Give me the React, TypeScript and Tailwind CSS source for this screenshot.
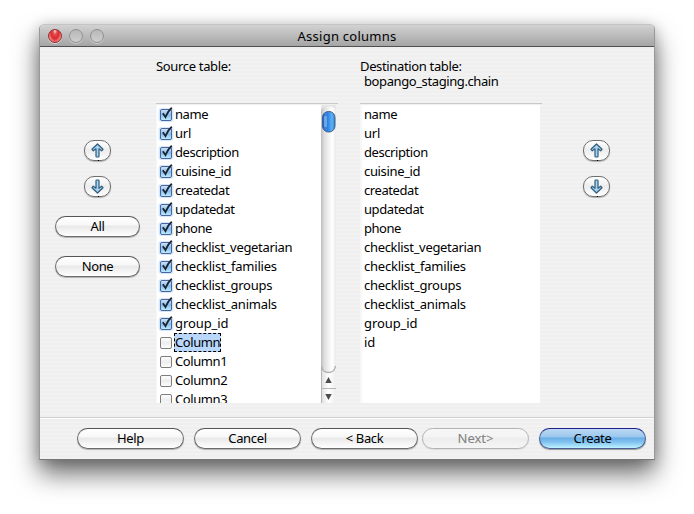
import React from "react";
import clsx from "clsx";

const destination: [string, string][] = [
  ["name", "tracking-[-0.45px]"],
  ["url", "tracking-[-0.2px]"],
  ["description", "tracking-[-0.42px]"],
  ["cuisine_id", "tracking-[-0.35px]"],
  ["createdat", "tracking-[-0.42px]"],
  ["updatedat", "tracking-[-0.42px]"],
  ["phone", "tracking-[-0.5px]"],
  ["checklist_vegetarian", "tracking-[-0.31px]"],
  ["checklist_families", "tracking-[-0.22px]"],
  ["checklist_groups", "tracking-[-0.27px]"],
  ["checklist_animals", "tracking-[-0.24px]"],
  ["group_id", "tracking-[-0.08px]"],
];

const extra = ["Column", "Column1", "Column2", "Column3"];

function Arrow({ down = false }: { down?: boolean }) {
  return (
    <button className="relative flex h-[21px] w-[27px] items-center justify-center rounded-[10px] border border-[#6f6f6f] bg-linear-to-b from-white via-[#ededed] to-white shadow-[0_1px_1px_#00000045]">
      <svg width="13" height="15" viewBox="0 0 13 15" className={clsx(down && "rotate-180")}>
        <path
          d="M6.5 1 L12 6.3 L10.7 7.8 L8 5.8 V13.2 Q8 14 7.2 14 H5.8 Q5 14 5 13.2 V5.8 L2.3 7.8 L1 6.3 Z"
          fill="#a9d3ee"
          stroke="#2d5c7e"
          strokeWidth="1.2"
          strokeLinejoin="round"
        />
      </svg>
      <span className="absolute -bottom-[1px] left-[13px] h-[1px] w-px bg-black" />
    </button>
  );
}

function PushButton({ label, kind = "normal", width = "w-[107px]" }: { label: string; kind?: "normal" | "disabled" | "primary"; width?: string }) {
  return (
    <button
      className={clsx(
        "flex h-[21px] shrink-0 items-center justify-center rounded-full border text-[13px] leading-none",
        width,
        label === "Next>" ? "tracking-[0px]" : "tracking-[-0.35px]",
        kind === "normal" &&
          "border-[#6c6c6c] border-t-[#555] bg-[linear-gradient(#fff_0%,#f8f8f8_40%,#e9e9e9_50%,#f4f4f4_75%,#fff_100%)] shadow-[0_1px_1px_#00000045]",
        kind === "disabled" &&
          "border-[#b3b3b3] bg-[linear-gradient(#f7f7f7_0%,#f4f4f4_40%,#ededed_50%,#f5f5f5_100%)] text-[#808080] shadow-[0_1px_1px_#00000015]",
        kind === "primary" &&
          "border-[#4a5f94] border-t-[#22228c] bg-[linear-gradient(#bcd8f4_0%,#9cc8ee_40%,#6aaee5_48%,#83c3f0_70%,#bdf2ff_100%)] shadow-[0_1px_1px_#00000060]",
      )}
    >
      {label}
    </button>
  );
}

function CheckBox({ checked }: { checked: boolean }) {
  return (
    <svg width="16" height="19" viewBox="0 0 16 19" className="shrink-0">
      <defs>
        <linearGradient id="on" x1="0" y1="0" x2="0" y2="1">
          <stop offset="0" stopColor="#d3e6f8" />
          <stop offset=".5" stopColor="#87bdec" />
          <stop offset="1" stopColor="#c0f0ff" />
        </linearGradient>
        <linearGradient id="off" x1="0" y1="0" x2="0" y2="1">
          <stop offset="0" stopColor="#fff" />
          <stop offset=".5" stopColor="#eee" />
          <stop offset="1" stopColor="#fff" />
        </linearGradient>
      </defs>
      {checked && <rect x="0.5" y="3" width="15" height="14" rx="3" fill="#a9d2f5" opacity=".5" />}
      <rect x="2.5" y="4.5" width="11" height="11" rx="1.5" fill={checked ? "url(#on)" : "url(#off)"} stroke={checked ? "#4a64a0" : "#7d7d7d"} />
      {checked && <path d="M4.800 8.300 L7.500 12 Q9.500 6.500 13.800 2.800" fill="none" stroke="#1c2530" strokeWidth="1.800" />}
    </svg>
  );
}

function SourceRow({ label, checked, tracking }: { label: string; checked: boolean; tracking?: string }) {
  const selected = label === "Column";
  return (
    <li className="flex h-[19px] items-center">
      <CheckBox checked={checked} />
      <span
        className={clsx(
          "flex h-[19px] items-center border border-dashed leading-none whitespace-nowrap",
          tracking,
          selected ? "w-[47px] border-black bg-[#b9d7fb]" : "border-transparent",
        )}
      >
        {label}
      </span>
    </li>
  );
}

function ScrollBar() {
  return (
    <div className="flex h-[298px] w-[15px] flex-col bg-[linear-gradient(90deg,#bdbdbd_0%,#dedede_22%,#f7f7f7_60%,#fff_75%,#eaeaea_100%)]">
      <svg width="15" height="298" viewBox="0 0 15 298">
        <defs>
          <linearGradient id="thumb" x1="0" x2="1" y1="0" y2="0">
            <stop offset="0" stopColor="#1650b8" />
            <stop offset=".2" stopColor="#3c86e2" />
            <stop offset=".42" stopColor="#2f80e0" />
            <stop offset=".75" stopColor="#58b4f8" />
            <stop offset="1" stopColor="#4080c8" />
          </linearGradient>
          <linearGradient id="foot" x1="0" x2="1" y1="0" y2="0">
            <stop offset="0" stopColor="#ddd" />
            <stop offset=".5" stopColor="#fff" />
            <stop offset="1" stopColor="#eee" />
          </linearGradient>
        </defs>
        <path d="M0 0 H15 V5 Q13 1.500 7.500 1.500 Q2 1.500 0 5Z" fill="#e6e6e6" />
        <rect x="1.500" y="6.500" width="12.500" height="20.500" rx="6" fill="url(#thumb)" stroke="#3f5f8c" />
        <rect x="3" y="11" width="3" height="11" rx="1" fill="#8fc0f5" opacity=".6" />
        <path d="M0 260 Q1 267.500 7.500 267.500 Q14 267.500 15 260 V298 H0Z" fill="url(#foot)" />
        <path d="M0.500 261 Q1.500 267.500 7.500 267.500 Q13.500 267.500 14.500 261" fill="none" stroke="#b0b0b0" strokeWidth="1.400" />
        <rect x="0" y="262" width="1" height="36" fill="#b5b5b5" />
        <path d="M4.300 278 H10.700 L7.500 272Z M4.300 289 H10.700 L7.500 295Z" fill="#4b4b4b" />
        <rect x="0" y="283" width="15" height="1" fill="#b5b5b5" />
      </svg>
    </div>
  );
}

export default function App() {
  return (
    <div className="h-[514px] w-[694px] overflow-hidden bg-white pt-[24px] pl-[39px] font-['Noto_Sans','Open_Sans',sans-serif] text-[13px] text-black">
      <div className="flex h-[436px] w-[616px] flex-col overflow-visible rounded-t-[5px] border border-[#989898] border-t-[#c4c4c4] border-b-[#777] bg-[repeating-linear-gradient(#f2f2f2_0px,#f2f2f2_2px,#efefef_2px,#efefef_4px)] shadow-[0_14px_26px_#00000090,0_2px_14px_#00000030]">
        <header className="flex h-[22px] shrink-0 items-center rounded-t-[4px] border-b border-[#505050] bg-linear-to-b from-[#d2d2d2] to-[#a5a5a5] pl-[8px]">
          <div className="flex w-[100px] gap-[7px]">
            <span className="h-[14px] w-[14px] rounded-full border border-[#8e3030] bg-[radial-gradient(ellipse_at_50%_8%,#ffdada_0%,#e85050_22%,#d82a30_48%,#ff8d8d_80%,#ffc0c0_100%)] shadow-[0_1px_0_#ffffff80]" />
            <span className="h-[14px] w-[14px] rounded-full border border-[#909090] bg-linear-to-b from-[#b8b8b8] to-[#cecece] shadow-[0_1px_0_#ffffff70]" />
            <span className="h-[14px] w-[14px] rounded-full border border-[#909090] bg-linear-to-b from-[#b8b8b8] to-[#cecece] shadow-[0_1px_0_#ffffff70]" />
          </div>
          <h1 className="w-[398px] pt-[2px] text-center text-[13px] leading-none tracking-[0.25px]">Assign columns</h1>
        </header>

        <main className="flex h-[370px] shrink-0">
          <div className="flex w-[116px] flex-col pt-[93px] pl-[15px]">
            <div className="flex flex-col gap-[15px] pl-[29px]">
              <Arrow />
              <Arrow down />
            </div>
            <div className="flex flex-col gap-[19px] pt-[19px]">
              <PushButton label="All" width="w-[85px]" />
              <PushButton label="None" width="w-[85px]" />
            </div>
          </div>

          <section className="w-[182px]">
            <div className="h-[56px] pt-[12px] leading-[15px] tracking-[-0.33px]">Source table:</div>
            <div className="flex h-[300px] border-t border-[#c8c8c8] pt-px">
              <ul className="h-[298px] w-[165px] overflow-hidden border-l border-[#f7f7f7] bg-white pl-px">
                {destination.map(([label, tracking]) => (
                  <SourceRow key={label} label={label} tracking={tracking} checked />
                ))}
                {extra.map((label) => (
                  <SourceRow key={label} label={label} tracking="tracking-[-0.4px]" checked={false} />
                ))}
              </ul>
              <ScrollBar />
            </div>
          </section>

          <section className="ml-[22px] w-[182px]">
            <div className="h-[56px] pt-[12px] leading-[15px]">
              <p className="tracking-[-0.35px]">Destination table:</p>
              <p className="pl-[4px] tracking-[-0.4px]">bopango_staging.chain</p>
            </div>
            <div className="h-[300px] border-t border-[#c8c8c8] pt-px">
              <ul className="h-[298px] w-[180px] border-l-2 border-[#f7f7f7] bg-white pl-[2px]">
                {[...destination, ["id", ""]].map(([label, tracking]) => (
                  <li key={label} className={clsx("flex h-[19px] items-center leading-none", tracking)}>
                    {label}
                  </li>
                ))}
              </ul>
            </div>
          </section>

          <div className="flex flex-col gap-[15px] pt-[93px] pl-[41px]">
            <Arrow />
            <Arrow down />
          </div>
        </main>

        <footer className="flex h-[42px] shrink-0 border-t border-[#cfcfcf] pt-[10px] pl-[37px] shadow-[inset_0_1px_0_#fff]">
          <div className="flex gap-[10px]">
            <PushButton label="Help" />
            <PushButton label="Cancel" />
            <PushButton label="< Back" />
          </div>
          <div className="flex gap-[10px] pl-[4px]">
            <PushButton label="Next>" kind="disabled" />
            <PushButton label="Create" kind="primary" />
          </div>
        </footer>
      </div>
    </div>
  );
}
